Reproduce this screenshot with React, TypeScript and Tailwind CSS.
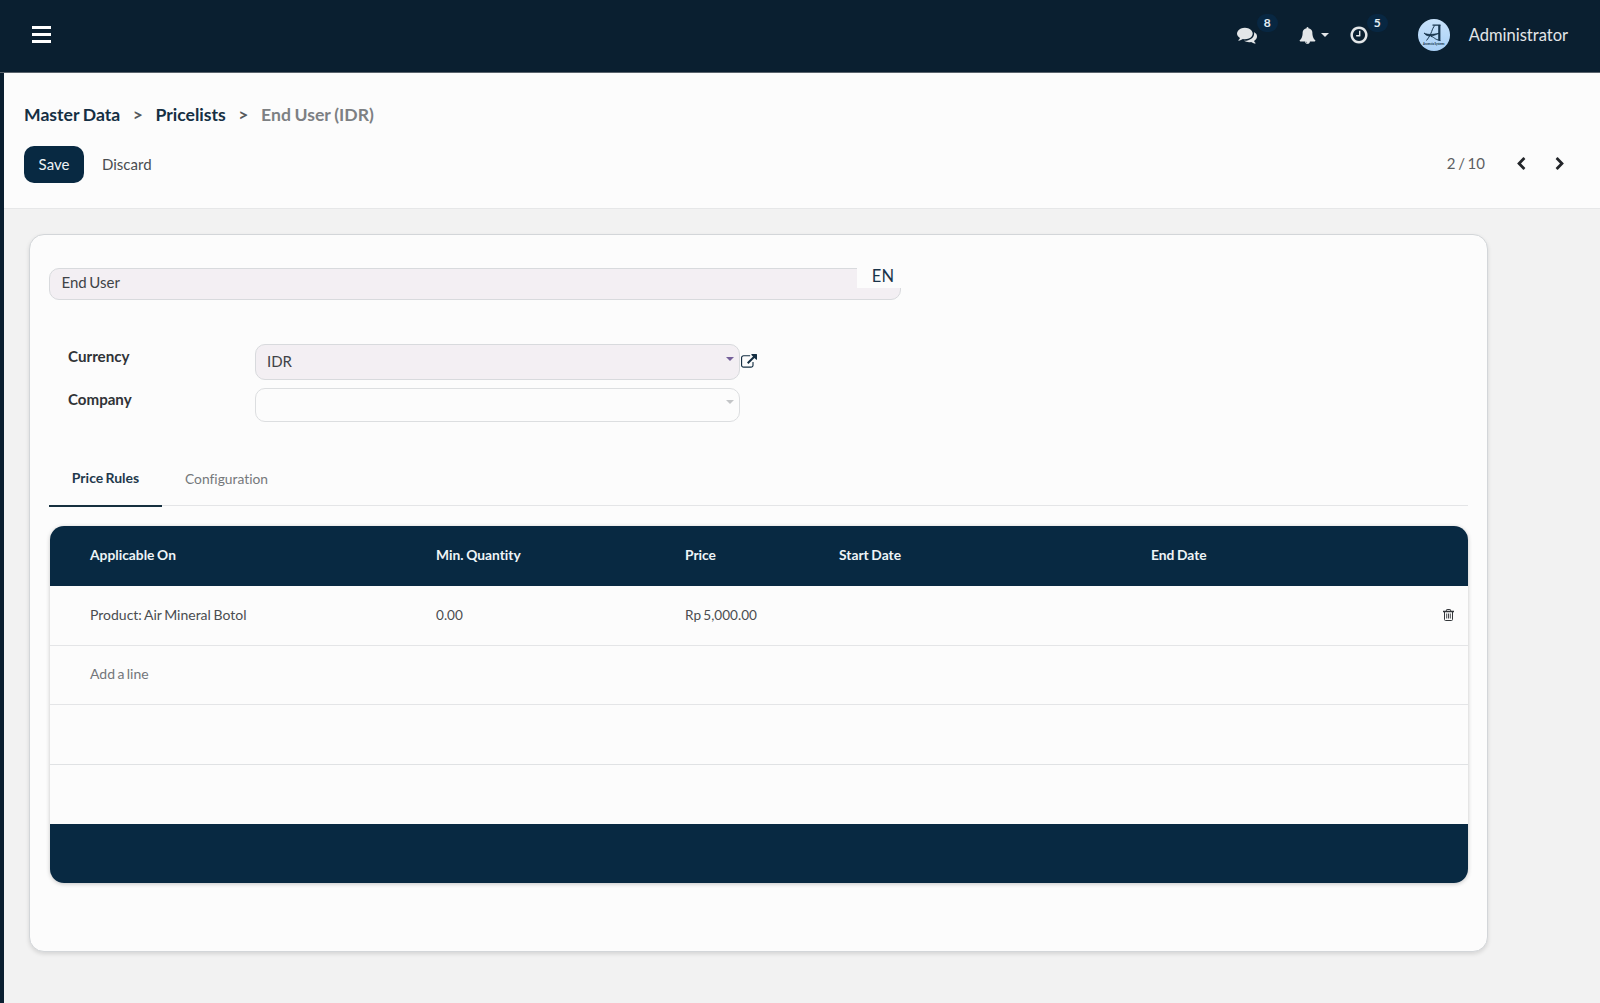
import React from "react";

const COLS = "grid grid-cols-[346px_249px_154px_312px_1fr] items-center pl-[40px]";

function Fa({ d, size, w = 1792, className = "" }: { d: string; size: number; w?: number; className?: string }) {
  return (
    <svg viewBox={`0 0 ${w} 1792`} width={(size * w) / 1792} height={size} fill="currentColor" className={`shrink-0 ${className}`}>
      <path d={d} />
    </svg>
  );
}

const COMMENTS =
  "M1408 768q0 139-94 257t-256.500 186.500-353.500 68.500q-86 0-176-16-124 88-278 128-36 9-86 16h-3q-11 0-20.500-8t-11.500-21q-1-3-1-6.500t.5-6.500 2-6l2.500-5 3.500-5.500 4-5 4.500-5 4-4.500q5-6 23-25t26-29.500 22.500-29 25-38.500 20.500-44q-124-72-195-177t-71-224q0-139 94-257t256.500-186.500 353.500-68.500 353.500 68.500 256.500 186.500 94 257zm384 256q0 120-71 224.500t-195 176.500q10 24 20.500 44t25 38.500 22.500 29 26 29.500 23 25q1 1 4 4.500t4.500 5 4 5 3.500 5.500l2.500 5 2 6 .5 6.500-1 6.500q-3 14-13 22t-22 7q-50-7-86-16-154-40-278-128-90 16-176 16-271 0-472-132 58 4 88 4 161 0 309-45t264-129q125-92 192-212t67-254q0-77-23-152 129 71 204 178t75 230z";
const BELL =
  "M912 1696q0-16-16-16-59 0-101.500-42.500t-42.500-101.500q0-16-16-16t-16 16q0 73 51.500 124.500t124.500 51.500q16 0 16-16zm816-288q0 52-38 90t-90 38h-448q0 106-75 181t-181 75-181-75-75-181h-448q-52 0-90-38t-38-90q50-42 91-88t85-119.500 74.500-158.500 50-206 19.500-260q0-152 117-282.500t307-158.500q-8-19-8-39 0-40 28-68t68-28 68 28 28 68q0 20-8 39 190 28 307 158.500t117 282.500q0 139 19.500 260t50 206 74.500 158.500 85 119.500 91 88z";
const CLOCK =
  "M1024 544v448q0 14-9 23t-23 9h-320q-14 0-23-9t-9-23v-64q0-14 9-23t23-9h224v-352q0-14 9-23t23-9h64q14 0 23 9t9 23zm416 352q0-148-73-273t-198-198-273-73-273 73-198 198-73 273 73 273 198 198 273 73 273-73 198-198 73-273zm224 0q0 209-103 385.500t-279.500 279.500-385.500 103-385.500-103-279.500-279.500-103-385.500 103-385.500 279.500-279.500 385.500-103 385.500 103 279.500 279.500 103 385.500z";
const CHEVRON_LEFT =
  "M1427 301l-531 531 531 531q19 19 19 45t-19 45l-166 166q-19 19-45 19t-45-19l-742-742q-19-19-19-45t19-45l742-742q19-19 45-19t45 19l166 166q19 19 19 45t-19 45z";
const CHEVRON_RIGHT =
  "M1363 877l-742 742q-19 19-45 19t-45-19l-166-166q-19-19-19-45t19-45l531-531-531-531q-19-19-19-45t19-45l166-166q19-19 45-19t45 19l742 742q19 19 19 45t-19 45z";
const EXTERNAL =
  "M1408 928v320q0 119-84.500 203.500t-203.500 84.500h-832q-119 0-203.500-84.500t-84.500-203.500v-832q0-119 84.500-203.500t203.500-84.500h704q14 0 23 9t9 23v64q0 14-9 23t-23 9h-704q-66 0-113 47t-47 113v832q0 66 47 113t113 47h832q66 0 113-47t47-113v-320q0-14 9-23t23-9h64q14 0 23 9t9 23zm384-864v512q0 26-19 45t-45 19-45-19l-176-176-652 652q-10 10-23 10t-23-10l-114-114q-10-10-10-23t10-23l652-652-176-176q-19-19-19-45t19-45 45-19h512q26 0 45 19t19 45z";

function Caret({ className }: { className: string }) {
  return (
    <svg viewBox="0 0 8 4" width="8" height="4" fill="currentColor" className={className}>
      <path d="M0 0h8L4 4z" />
    </svg>
  );
}

function Logo() {
  return (
    <div className="relative h-8 w-8 overflow-hidden rounded-full bg-gradient-to-b from-[#c8e2fb] to-[#a9d0f6]">
      <svg viewBox="0 0 32 32" width="32" height="32" fill="none" stroke="#17344d">
        <path d="M14.500 6.200H22.500" strokeWidth="1.200" />
        <path d="M21.300 6V21.600" strokeWidth="2.200" />
        <path d="M16.800 6.500C13.500 10 14.500 14 8.500 21.500" strokeWidth="1" />
        <path d="M6 14C10 16.200 15 15.500 21 14.300C15 17.200 9 18.500 6 14Z" fill="#17344d" strokeWidth="0.800" />
        <path d="M13 17.500C16 17.500 16 20.500 22.500 21.600" strokeWidth="1" />
      </svg>
      <span className="absolute inset-x-[-6px] top-[23px] text-center text-[2.700px] leading-[4px] font-black [word-spacing:0] text-[#17344d]">Ascencio Systems</span>
    </div>
  );
}

function Trash() {
  return (
    <svg viewBox="0 0 11 12" width="11" height="12" fill="none" stroke="#33363a" className="-mt-[2px]">
      <path d="M0 2.500h11" strokeWidth="1.300" />
      <path d="M3.400 2.300V1.200q0-.7.7-.7h2.800q.7 0 .7.700v1.100" />
      <path d="M1.500 2.500v8q0 1 1 1h6q1 0 1-1v-8" />
      <path d="M3.700 4.500v5M5.500 4.500v5M7.300 4.500v5" strokeWidth="0.900" />
    </svg>
  );
}

function Badge({ children, className }: { children: React.ReactNode; className: string }) {
  return (
    <span className={`absolute flex h-[18px] w-[21px] items-center justify-center rounded-full bg-[#082742] text-[12px] font-bold text-[#e4eef5] ${className}`}>
      {children}
    </span>
  );
}

export default function App() {
  return (
    <div className="flex h-[1003px] w-[1600px] flex-col overflow-hidden bg-[#f2f2f2] font-['Lato',sans-serif] text-[15px] text-[#4a4d50] [font-variant-ligatures:none] [word-spacing:-1.200px]">
      <header className="flex h-[73px] shrink-0 items-center justify-between border-b border-[#5a646d] bg-[#0a1f30] pr-[32px] pb-[2px] pl-[32px] text-[#e3e6e8]">
        <div className="mb-px flex h-[17px] w-[19px] flex-col justify-between">
          <span className="h-[3px] bg-white" />
          <span className="h-[3px] bg-white" />
          <span className="h-[3px] bg-white" />
        </div>
        <div className="flex h-full items-center">
          <div className="relative mr-[42px] flex h-5 items-center">
            <Fa d={COMMENTS} size={20} />
            <Badge className="-top-[11px] left-[20px]">8</Badge>
          </div>
          <div className="mr-[20px] flex items-center gap-[5px]">
            <Fa d={BELL} size={17} />
            <Caret className="" />
          </div>
          <div className="relative mr-[49px] flex h-5 items-center">
            <Fa d={CLOCK} size={20} />
            <Badge className="-top-[11px] left-[18px]">5</Badge>
          </div>
          <Logo />
          <span className="ml-[19px] text-[16.500px] leading-6">Administrator</span>
        </div>
      </header>

      <div className="flex min-h-0 flex-1">
        <aside className="w-[4px] shrink-0 bg-[#0a1f30]" />
        <main className="min-w-0 flex-1">
          <section className="h-[136px] border-b border-[#e6e7e8] bg-[#fcfcfc] pt-[30px] pl-[20px]">
            <nav className="flex h-6 items-center text-[17.600px] font-bold text-[#152f43] [word-spacing:-0.600px]">
              <span>Master Data</span>
              <span className="mx-[12.500px] text-[#55595c]">&gt;</span>
              <span>Pricelists</span>
              <span className="mx-[12.500px] text-[#55595c]">&gt;</span>
              <span className="text-[#7d8083]">End User (IDR)</span>
            </nav>
            <div className="mt-[19px] flex h-[37px] items-center">
              <button className="h-[37px] w-[60px] rounded-[10px] bg-[#082942] text-[15px] text-[#eef3f6]">Save</button>
              <button className="ml-[18px]">Discard</button>
              <span className="mr-[29px] mb-[2px] ml-auto text-[15px] text-[#5c5f62]">2 / 10</span>
              <Fa d={CHEVRON_LEFT} size={14} className="mr-[25px] mb-[2px] text-[#222529]" />
              <Fa d={CHEVRON_RIGHT} size={14} className="mr-[33px] mb-[2px] text-[#222529]" />
            </div>
          </section>

          <section className="mt-[25px] ml-[25px] h-[718px] w-[1459px] rounded-[15px] border border-[#d3d6d9] bg-[#fcfcfc] px-[19px] pt-[33px] shadow-[0_2px_4px_rgba(0,0,0,0.12)]">
            <div className="relative flex h-[32px] w-[852px] items-center rounded-[10px] border border-[#d8dadd] bg-[#f3eff3] pb-[3px] pl-[11.500px] text-[#404347]">
              End User
              <span className="absolute -top-[3px] -right-px flex h-[22px] w-[44px] items-center justify-end bg-[#fcfcfc] pr-[7px] pb-[2px] text-[16.500px] text-[#1b344a]">EN</span>
            </div>

            <div className="mt-[44px] ml-[19px] flex h-[36px]">
              <label className="w-[187px] pt-px text-[15.200px] font-bold text-[#303337]">Currency</label>
              <div className="flex h-[36px] w-[485px] items-center justify-between rounded-[10px] border border-[#d8dadd] bg-[#f3eff3] pr-[5px] pb-[2px] pl-[11px] text-[#404347]">
                IDR
                <Caret className="mb-[5px] text-[#75609a]" />
              </div>
              <Fa d={EXTERNAL} size={16} className="mt-[10px] ml-px text-[#152f43]" />
            </div>
            <div className="mt-[8px] ml-[19px] flex h-[34px]">
              <label className="w-[187px] text-[15.100px] font-bold text-[#303337]">Company</label>
              <div className="flex h-[34px] w-[485px] items-center justify-end rounded-[10px] border border-[#dcdee0] pr-[5px]">
                <Caret className="mb-[6px] text-[#c3c5c7]" />
              </div>
            </div>

            <div className="mt-[32px] flex h-[52px] border-b border-[#e4e5e7] text-[14px]">
              <div className="flex h-[53px] w-[113px] shrink-0 items-center justify-center border-b-2 border-[#16303f] pb-[4px] font-bold text-[#1f394c]">Price Rules</div>
              <div className="flex h-[52px] items-center pb-px pl-[23px] text-[13.800px] text-[#75787b]">Configuration</div>
            </div>

            <div className="mt-[20px] ml-px h-[357px] w-[1418px] overflow-hidden rounded-[14px] text-[14px] shadow-[0_1px_4px_rgba(0,0,0,0.22)]">
              <div className={`${COLS} h-[60px] bg-[#082942] pb-[2px] text-[13.800px] font-bold text-[#eef4f7] [word-spacing:-0.700px]`}>
                <span>Applicable On</span>
                <span>Min. Quantity</span>
                <span>Price</span>
                <span>Start Date</span>
                <span>End Date</span>
              </div>
              <div className={`${COLS} h-[60px] border-b border-[#e4e5e7]`}>
                <span className="-mt-[2px] [word-spacing:-1px]">Product: Air Mineral Botol</span>
                <span className="text-[13.600px]">0.00</span>
                <span className="text-[13.600px]">Rp 5,000.00</span>
                <span />
                <span className="flex justify-end pr-[14px]">
                  <Trash />
                </span>
              </div>
              <div className="flex h-[59px] items-center border-b border-[#e4e5e7] pb-[3px] pl-[40px] text-[#73767a]">Add a line</div>
              <div className="h-[60px] border-b border-[#e0e2e4]" />
              <div className="h-[59px]" />
              <div className="h-[59px] bg-[#082942]" />
            </div>
          </section>
        </main>
      </div>
    </div>
  );
}
